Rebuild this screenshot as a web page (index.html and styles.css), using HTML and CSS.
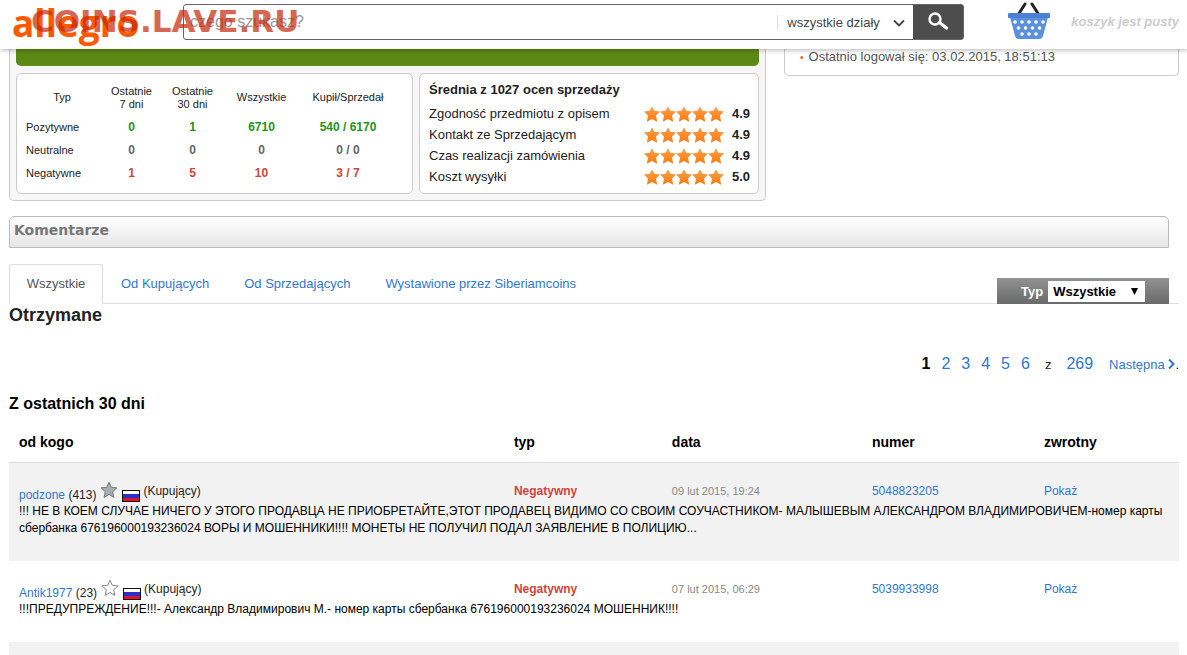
FILE: index.html
```html
<!DOCTYPE html>
<html lang="pl">
<head>
    <meta charset="UTF-8">
    <meta name="viewport" content="width=device-width, initial-scale=1.0">
    <title>Komentarze | Allegro</title>
    <link rel="stylesheet" href="styles.css">
</head>
<body>

    <!-- Shared icon shapes -->
    <svg class="symbols" aria-hidden="true">
        <linearGradient id="orange" x1="0" y1="0" x2="0" y2="1">
            <stop offset="0" stop-color="#f9a04e"/>
            <stop offset="1" stop-color="#fb7a0c"/>
        </linearGradient>
        <symbol id="star" viewBox="0 0 18 18">
            <path d="M9 1.2l2.3 5.1 5.6.6-4.2 3.8 1.2 5.6L9 13.500l-4.900 2.800 1.200-5.600L1.100 6.900l5.600-.6z"/>
        </symbol>
        <symbol id="stars" viewBox="0 0 80 16">
            <path id="s" d="M8 .3l2.300 4.400 5.700.7-4 4.100 1.100 6.200L8 13l-5.100 2.700L4 9.500 0 5.400l5.700-.7z"/>
            <use href="#s" x="16"/>
            <use href="#s" x="32"/>
            <use href="#s" x="48"/>
            <use href="#s" x="64"/>
        </symbol>
        <symbol id="flag" viewBox="0 0 18 12">
            <rect width="18" height="12" fill="#111"/>
            <rect x="1" y="1" width="16" height="4" fill="#fff"/>
            <rect x="1" y="4" width="16" height="4" fill="#2b2fc4"/>
            <rect x="1" y="8" width="16" height="3" fill="#dc1430"/>
        </symbol>
    </svg>

    <header class="topbar">
        <a href="#" class="logo">allegro</a>
        <form class="search">
            <input type="text" class="search-input" placeholder="czego szukasz?" aria-label="czego szukasz?">
            <div class="department">
                <select aria-label="Dział">
                    <option>wszystkie działy</option>
                </select>
                <svg class="chevron" viewBox="0 0 12 8"><path d="M1 1.500l5 5 5-5" fill="none" stroke="#444" stroke-width="1.800"/></svg>
            </div>
            <button type="submit" class="search-button" aria-label="Szukaj">
                <svg viewBox="0 0 20 18" width="20" height="18">
                    <circle cx="7" cy="7" r="5.500" fill="none" stroke="#fff" stroke-width="2.400"/>
                    <path d="M11.500 10.500l7 5.500" stroke="#fff" stroke-width="3.400" stroke-linecap="round"/>
                </svg>
            </button>
        </form>
        <a href="#" class="cart">
            <svg viewBox="0 0 44 38" width="44" height="38">
                <path d="M18 2l-7 11M25 2l7 11" stroke="#222" stroke-width="3" stroke-linecap="round"/>
                <path d="M3 15h38l-5 19q-1 3-4 3H12q-3 0-4-3z" fill="#5b8fe0"/>
                <rect x="1" y="11" width="42" height="5" rx="1" fill="#4a80d6"/>
                <g fill="#fff">
                    <circle cx="8" cy="20" r="1.800"/><circle cx="15" cy="20" r="1.800"/><circle cx="22" cy="20" r="1.800"/><circle cx="29" cy="20" r="1.800"/><circle cx="36" cy="20" r="1.800"/>
                    <circle cx="11.500" cy="26" r="1.800"/><circle cx="18.500" cy="26" r="1.800"/><circle cx="25.500" cy="26" r="1.800"/><circle cx="32.500" cy="26" r="1.800"/>
                    <circle cx="15" cy="32" r="1.800"/><circle cx="22" cy="32" r="1.800"/><circle cx="29" cy="32" r="1.800"/>
                </g>
            </svg>
            <span>koszyk jest pusty</span>
        </a>
        <div class="watermark">COINS.LAVE.RU</div>
    </header>

    <main class="page">
        <section class="summary">
            <div class="rating-box">
                <div class="green-bar"></div>
                <div class="panels">
                    <div class="panel">
                        <table class="stats">
                            <thead>
                                <tr>
                                    <th class="kind">Typ</th>
                                    <th class="days">Ostatnie<br>7 dni</th>
                                    <th class="days">Ostatnie<br>30 dni</th>
                                    <th class="all">Wszystkie</th>
                                    <th>Kupił/Sprzedał</th>
                                </tr>
                            </thead>
                            <tbody>
                                <tr class="positive"><th>Pozytywne</th><td>0</td><td>1</td><td>6710</td><td>540 / 6170</td></tr>
                                <tr class="neutral"><th>Neutralne</th><td>0</td><td>0</td><td>0</td><td>0 / 0</td></tr>
                                <tr class="negative"><th>Negatywne</th><td>1</td><td>5</td><td>10</td><td>3 / 7</td></tr>
                            </tbody>
                        </table>
                    </div>
                    <div class="panel scores">
                        <h3>Średnia z 1027 ocen sprzedaży</h3>
                        <div class="score"><span>Zgodność przedmiotu z opisem</span><svg class="stars"><use href="#stars"/></svg><b>4.9</b></div>
                        <div class="score"><span>Kontakt ze Sprzedającym</span><svg class="stars"><use href="#stars"/></svg><b>4.9</b></div>
                        <div class="score"><span>Czas realizacji zamówienia</span><svg class="stars"><use href="#stars"/></svg><b>4.9</b></div>
                        <div class="score"><span>Koszt wysyłki</span><svg class="stars"><use href="#stars"/></svg><b>5.0</b></div>
                    </div>
                </div>
            </div>
            <ul class="login-box">
                <li>Ostatnio logował się: 03.02.2015, 18:51:13</li>
            </ul>
        </section>

        <h2 class="section-bar">Komentarze</h2>

        <nav class="tabs">
            <a href="#" class="tab active">Wszystkie</a>
            <a href="#" class="tab">Od Kupujących</a>
            <a href="#" class="tab">Od Sprzedających</a>
            <a href="#" class="tab">Wystawione przez Siberiamcoins</a>
            <div class="filter">
                <label for="type">Typ</label>
                <div class="filter-select">
                    <select id="type">
                        <option>Wszystkie</option>
                    </select>
                    <svg class="arrow" viewBox="0 0 7 7"><path d="M0 0h7L3.500 7z"/></svg>
                </div>
            </div>
        </nav>

        <h2 class="received">Otrzymane</h2>

        <div class="pagination">
            <b>1</b>
            <a href="#">2</a>
            <a href="#">3</a>
            <a href="#">4</a>
            <a href="#">5</a>
            <a href="#">6</a>
            <span class="of">z</span>
            <a href="#">269</a>
            <span class="next"><a href="#">Następna <svg viewBox="0 0 7 10" width="7" height="10"><path d="M1 .5L5.500 5 1 9.500" fill="none" stroke="#2f77d0" stroke-width="2"/></svg></a>.</span>
        </div>

        <h3 class="period">Z ostatnich 30 dni</h3>

        <table class="comments">
            <thead>
                <tr>
                    <th class="from">od kogo</th>
                    <th class="type">typ</th>
                    <th class="date">data</th>
                    <th class="number">numer</th>
                    <th>zwrotny</th>
                </tr>
            </thead>
            <tbody>
                <tr class="meta">
                    <td>
                        <div class="author">
                            <span class="name"><a href="#">podzone</a> (413)</span>
                            <svg class="level gray"><use href="#star"/></svg>
                            <svg class="flag"><use href="#flag"/></svg>
                            <span class="role">(Kupujący)</span>
                        </div>
                    </td>
                    <td class="verdict">Negatywny</td>
                    <td class="when">09 lut 2015, 19:24</td>
                    <td><a href="#">5048823205</a></td>
                    <td><a href="#">Pokaż</a></td>
                </tr>
                <tr>
                    <td colspan="5" class="text">!!! НЕ В КОЕМ СЛУЧАЕ НИЧЕГО У ЭТОГО ПРОДАВЦА НЕ ПРИОБРЕТАЙТЕ,ЭТОТ ПРОДАВЕЦ ВИДИМО СО СВОИМ СОУЧАСТНИКОМ- МАЛЫШЕВЫМ АЛЕКСАНДРОМ ВЛАДИМИРОВИЧЕМ-номер карты сбербанка 676196000193236024 ВОРЫ И МОШЕННИКИ!!!! МОНЕТЫ НЕ ПОЛУЧИЛ ПОДАЛ ЗАЯВЛЕНИЕ В ПОЛИЦИЮ...</td>
                </tr>
            </tbody>
            <tbody>
                <tr class="meta">
                    <td>
                        <div class="author">
                            <span class="name"><a href="#">Antik1977</a> (23)</span>
                            <svg class="level"><use href="#star"/></svg>
                            <svg class="flag"><use href="#flag"/></svg>
                            <span class="role">(Kupujący)</span>
                        </div>
                    </td>
                    <td class="verdict">Negatywny</td>
                    <td class="when">07 lut 2015, 06:29</td>
                    <td><a href="#">5039933998</a></td>
                    <td><a href="#">Pokaż</a></td>
                </tr>
                <tr>
                    <td colspan="5" class="text">!!!ПРЕДУПРЕЖДЕНИЕ!!!- Александр Владимирович М.- номер карты сбербанка 676196000193236024 МОШЕННИК!!!!</td>
                </tr>
            </tbody>
            <tbody>
                <tr class="more"><td colspan="5"></td></tr>
            </tbody>
        </table>
    </main>

</body>
</html>
```
FILE: styles.css
```css
* {
    box-sizing: border-box;
}
body {
    margin: 0;
    background: #fff;
    color: #222;
    font-family: "Liberation Sans", Arial, sans-serif;
    font-size: 12px;
}
a {
    color: #2f77d0;
    text-decoration: none;
}
h2, h3, ul {
    margin: 0;
    padding: 0;
}
table {
    border-collapse: collapse;
}
svg {
    flex: none;
}
.symbols {
    position: absolute;
    width: 0;
    height: 0;
}

/* Top bar */
.topbar {
    position: relative;
    z-index: 1;
    display: flex;
    align-items: flex-start;
    height: 49px;
    padding: 0 8px 0 12px;
    background: #fff;
    box-shadow: 0 1px 5px rgba(0, 0, 0, 0.3);
}
.logo {
    width: 171px;
    color: #ff5a00;
    font-family: "Open Sans", sans-serif;
    font-size: 37px;
    font-weight: 700;
    line-height: 46px;
}
.search {
    display: flex;
    flex: 1;
    height: 36px;
    margin-top: 4px;
    border: 1px solid #666;
    border-radius: 3px;
}
.search-input {
    flex: 1;
    min-width: 0;
    padding: 0 6px;
    border: 0;
    background: none;
    font-family: inherit;
    font-size: 16px;
}
.search-input::placeholder {
    color: #999;
}
.department {
    display: grid;
    align-items: center;
    width: 136px;
    margin: 10px 0;
    border-left: 1px solid #ddd;
}
.department select,
.filter-select select {
    grid-area: 1 / 1;
    appearance: none;
    width: 100%;
    border: 0;
    background: none;
    font-family: inherit;
}
.department select {
    padding: 0 9px;
    color: #444;
    font-size: 13px;
}
.chevron {
    grid-area: 1 / 1;
    justify-self: end;
    width: 12px;
    height: 8px;
    margin-right: 8px;
    pointer-events: none;
}
.search-button {
    width: 50px;
    padding: 0;
    border: 0;
    background: #4d4d4d;
    cursor: pointer;
}
.cart {
    display: flex;
    align-items: center;
    gap: 20px;
    margin: 2px 0 0 43px;
    color: #ccc;
    font-size: 13px;
    font-style: italic;
    font-weight: bold;
}
.watermark {
    position: absolute;
    top: 2px;
    left: 31px;
    color: #c5280a;
    font-family: "DejaVu Sans", sans-serif;
    font-size: 31px;
    font-weight: bold;
    line-height: 38px;
    opacity: 0.7;
    pointer-events: none;
}

/* Seller summary */
.page {
    padding: 0 8px 0 9px;
}
.summary {
    display: grid;
    grid-template-columns: 757fr 395fr;
    gap: 18px;
    align-items: start;
}
.rating-box {
    padding: 0 6px 6px;
    border: 1px solid #ccc;
    border-top: 0;
    border-radius: 0 0 5px 5px;
    background: #f7f7f7;
}
.green-bar {
    height: 17px;
    border-radius: 0 0 5px 5px;
    background: #5a8a14;
}
.panels {
    display: grid;
    grid-template-columns: 397fr 340fr;
    gap: 6px;
    margin-top: 7px;
}
.panel {
    border: 1px solid #ccc;
    border-radius: 5px;
    background: #fff;
}
.stats {
    width: 100%;
    margin-top: 6px;
    text-align: center;
}
.stats th {
    padding: 0;
    font-size: 11px;
    font-weight: normal;
}
.stats thead th {
    height: 35px;
    line-height: 13px;
}
.stats thead th:last-child,
.stats td:last-child {
    padding-right: 16px;
}
.stats tbody tr {
    height: 23px;
}
.stats tbody th {
    padding-left: 9px;
    text-align: left;
}
.stats .kind {
    width: 84px;
    padding-left: 6px;
}
.stats .days {
    width: 61px;
}
.stats .all {
    width: 77px;
}
.stats td {
    padding: 0;
    font-weight: bold;
}
.positive td {
    color: #1b9420;
}
.neutral td {
    color: #666;
}
.negative td {
    color: #d0453a;
}
.scores {
    padding: 6px 8px 7px 9px;
    font-size: 13px;
}
.scores h3 {
    font-size: 13px;
    line-height: 20px;
}
.score {
    display: flex;
    align-items: center;
    gap: 8px;
    margin-top: 3px;
    line-height: 18px;
}
.scores h3 + .score {
    margin-top: 5px;
}
.score span {
    flex: 1;
}
.stars {
    width: 80px;
    height: 16px;
    fill: url(#orange);
}
.login-box {
    height: 27px;
    padding: 0 15px;
    border: 1px solid #ccc;
    border-top: 0;
    border-radius: 0 0 5px 5px;
    color: #555;
    font-size: 13px;
    line-height: 16px;
    list-style: none;
}
.login-box li::before {
    content: "•";
    margin-right: 5px;
    color: #f0522a;
    font-size: 10px;
}

/* Comments heading and tabs */
.section-bar {
    height: 32px;
    margin: 15px 10px 16px 0;
    padding-left: 4px;
    border: 1px solid #bbb;
    border-radius: 5px 5px 0 0;
    background: linear-gradient(#fff, #e6e6e6);
    color: #777;
    font-family: "DejaVu Sans", sans-serif;
    font-size: 14px;
    line-height: 27px;
}
.tabs {
    display: flex;
    align-items: flex-end;
    gap: 1px;
    height: 40px;
    border-bottom: 1px solid #ddd;
}
.tab {
    padding: 0 17px;
    font-size: 13px;
    line-height: 39px;
}
.tab.active {
    min-width: 94px;
    margin-bottom: -1px;
    padding: 0 15px;
    border: 1px solid #ddd;
    border-bottom-color: #fff;
    border-radius: 4px 4px 0 0;
    background: #fff;
    color: #555;
    line-height: 38px;
    text-align: center;
}
.filter {
    display: flex;
    align-items: center;
    gap: 5px;
    width: 172px;
    height: 26px;
    margin: 0 10px -1px auto;
    padding-left: 24px;
    background: linear-gradient(#929292, #6a6a6a);
    color: #fff;
    font-size: 13px;
    font-weight: bold;
}
.filter-select {
    display: grid;
    align-items: center;
    width: 97px;
    background: #fff;
}
.filter-select select {
    height: 21px;
    padding: 0 5px;
    color: #000;
    font-size: 13px;
    font-weight: bold;
}
.arrow {
    grid-area: 1 / 1;
    justify-self: end;
    width: 7px;
    height: 7px;
    margin-right: 7px;
    pointer-events: none;
}
.received {
    font-size: 18px;
    line-height: 22px;
}

/* Pagination */
.pagination {
    display: flex;
    align-items: baseline;
    justify-content: flex-end;
    gap: 11px;
    margin-top: 28px;
    font-size: 16px;
    line-height: 20px;
}
.pagination b {
    color: #000;
}
.of {
    margin: 0 4px;
    font-size: 13px;
}
.next {
    margin-left: 5px;
    font-size: 13px;
}
.period {
    margin: 19px 0 8px;
    color: #000;
    font-size: 16px;
    line-height: 20px;
}

/* Comments table */
.comments {
    width: 100%;
    table-layout: fixed;
}
.comments th,
.comments td {
    padding: 0 10px;
    text-align: left;
}
.comments thead th {
    height: 40px;
    border-bottom: 1px solid #ddd;
    color: #000;
    font-size: 14px;
}
.comments .from {
    width: 42.3%;
}
.comments .type {
    width: 13.5%;
}
.comments .date {
    width: 17.1%;
}
.comments .number {
    width: 14.7%;
}
.comments tbody:nth-of-type(odd) {
    background: #f2f2f2;
}
.comments .meta td {
    height: 40px;
    padding-top: 18px;
    vertical-align: top;
    line-height: 20px;
}
.author {
    display: flex;
    align-items: flex-start;
    height: 22px;
}
.name {
    margin: 4px 4px 0 0;
}
.level {
    width: 18px;
    height: 18px;
    margin-right: 4px;
    fill: #fff;
    stroke: #888;
}
.level.gray {
    fill: #a9aeb5;
    stroke: #777;
}
.flag {
    width: 18px;
    height: 12px;
    margin: 9px 3px 0 0;
}
.verdict {
    color: #d0453a;
    font-weight: bold;
}
.comments .when {
    color: #888;
    font-size: 11px;
}
.comments .text {
    padding-bottom: 24px;
    color: #000;
    line-height: 17px;
}
.more td {
    height: 13px;
}
```
